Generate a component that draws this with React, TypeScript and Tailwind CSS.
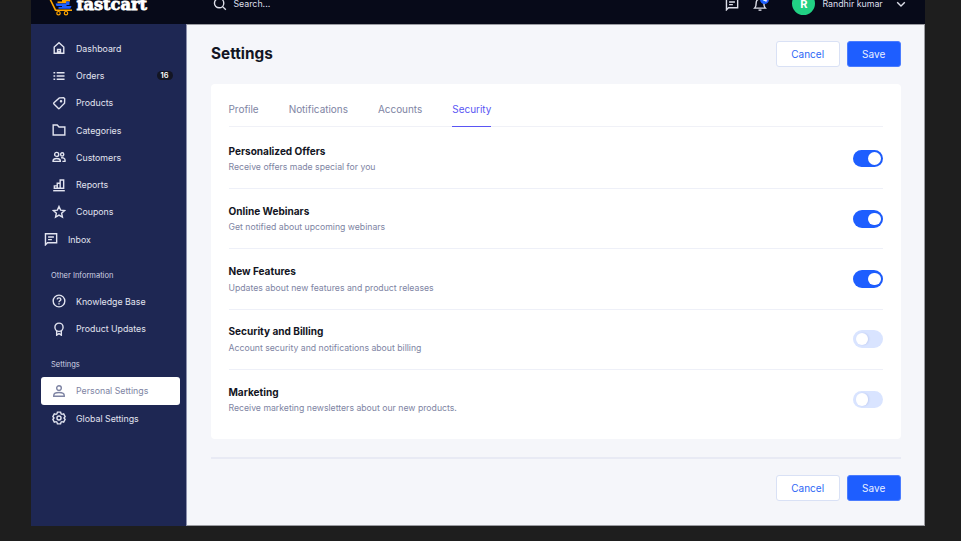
import React from 'react';

const paths: Record<string, React.ReactNode> = {
  home: (
    <>
      <path d="M3.8 21V10.2L12 3l8.200 7.200V21z" />
      <path d="M9.500 21v-6.500h5V21M12 17v4" />
    </>
  ),
  list: <path d="M8 6.500h13.500M8 12h13.500M8 17.500h13.500M2.500 6.500h3M2.500 12h3M2.500 17.500h3" />,
  tag: (
    <>
      <path d="M12.500 3.300l7.500-.3 1.800 1.800-.3 7.500-8.700 8.900a1.500 1.500 0 0 1-2.100 0l-7.400-7.400a1.500 1.500 0 0 1 0-2.100z" />
      <circle cx="15.500" cy="9" r="1" fill="currentColor" />
    </>
  ),
  folder: <path d="M2 20.500v-17h7l3 3.300h10v13.700z" />,
  users: (
    <>
      <circle cx="8" cy="7.500" r="3.500" />
      <path d="M1.800 19.500v-1c0-2.600 2-4 6.200-4s6.200 1.400 6.200 4v1z" />
      <circle cx="17.500" cy="7.500" r="2.700" />
      <path d="M15.500 13.500c4.500-.5 6.800 1 6.800 3.500v2.500h-4.500" />
    </>
  ),
  chart: (
    <>
      <path d="M4 17.500v-4h5v4zM9 17.500V9h5v8.500zM14 17.500V3.500h6v14z" />
      <path d="M2 21.800h20" />
    </>
  ),
  star: <path d="M12 2.500l2.800 6.200 6.700.8-5 4.500 1.400 6.700-5.900-3.400-5.900 3.400L7.500 14l-5-4.500 6.700-.8z" />,
  chat: (
    <>
      <path d="M2.500 22V3h19.200v15.500H6z" />
      <path d="M7 8.500h10M7 13h6.500" />
    </>
  ),
  help: (
    <>
      <circle cx="12" cy="12" r="10" />
      <path d="M8.800 9.300c.3-3.600 6.400-3.400 6.400 0 0 2.200-3.200 2.300-3.200 4.700M12 16v2" />
    </>
  ),
  award: (
    <>
      <circle cx="12" cy="9" r="7" />
      <path d="M8 15v7.500l4-2.500 4 2.500V15" />
    </>
  ),
  user: (
    <>
      <circle cx="12" cy="7" r="4" />
      <path d="M3 21v-1.500c0-3.200 3-5 9-5s9 1.800 9 5V21z" />
    </>
  ),
  gear: (
    <>
      <path d="M9.300 2h5.400l.8 2.800 1.600.9 2.900-.7 2.500 4.600-2 2.400 2 2.400-2.500 4.600-2.900-.7-1.600.9-.8 2.800H9.300l-.8-2.800-1.600-.9-2.900.7-2.500-4.600 2-2.400-2-2.400L4 5l2.900.7 1.600-.9z" />
      <circle cx="12" cy="12" r="3.500" />
    </>
  ),
  search: (
    <>
      <circle cx="10.500" cy="10.500" r="8" />
      <path d="M16.500 16.500l5.500 5.500" />
    </>
  ),
  bell: (
    <>
      <path d="M3 19c2-2 2.500-4 2.500-9.500 0-8 13-8 13 0 0 5.500.5 7.500 2.500 9.500z" />
      <path d="M9.500 22.500h5" />
    </>
  ),
  down: <path d="M5.500 9l6.500 6.500L18.500 9" />,
};

function Icon({ name, className = 'size-3.5' }: { name: string; className?: string }) {
  return (
    <svg viewBox="0 0 24 24" fill="none" stroke="currentColor" strokeWidth="2.400" className={`shrink-0 ${className}`}>
      {paths[name]}
    </svg>
  );
}

function NavItem({ icon, label, badge, active }: { icon: string; label: string; badge?: string; active?: boolean }) {
  return (
    <a
      className={`flex h-[27.3px] items-center rounded-[3px] pl-[10.500px] pr-[7px] ${
        active ? 'bg-white text-[#7e84a3]' : 'text-[#e2e4f0]'
      }`}
    >
      <Icon name={icon} />
      <span className="ml-[10.500px]">{label}</span>
      {badge && (
        <span className="ml-auto flex h-[9.500px] w-4 items-center justify-center rounded-full bg-[#131523] text-[7.500px] font-semibold text-white">
          {badge}
        </span>
      )}
    </a>
  );
}

function Actions() {
  return (
    <div className="flex gap-[7px] text-[10px]">
      <button className="h-[26px] w-[64px] rounded-[3px] border border-[#d9e1f5] bg-white text-[#2d67f6]">Cancel</button>
      <button className="h-[26px] w-[54px] rounded-[3px] border border-[#4a7cff] bg-[#1e5eff] text-[#e8efff]">Save</button>
    </div>
  );
}

function Logo() {
  return (
    <div className="flex items-center">
      <svg viewBox="0 0 26 24" className="h-6 w-[26px]" fill="none">
        <path d="M0 6h1.500l6 12.200H24" stroke="#ffa600" strokeWidth="1.600" />
        <circle cx="10.500" cy="21.200" r="1.700" fill="#070a19" stroke="#ffa600" strokeWidth="1.200" />
        <circle cx="18" cy="21.200" r="1.700" fill="#070a19" stroke="#ffa600" strokeWidth="1.200" />
        <path d="M11 5h11v4.500h-3.500v1.800H9.500V9.500H14V8h-3z" fill="#ffa600" />
        <path d="M7.500 11.500h10.500v-2h3.500v3.500h-3v1h5l-1.200 2.800H10.500V15h3.500v-1H8.500z" fill="#1e5eff" />
      </svg>
      <span className="ml-[2.500px] pt-[3px] font-['DejaVu_Serif',serif] text-[16.200px] font-bold leading-none tracking-[0px] text-white [-webkit-text-stroke:0.8px_white]">
        fastcart
      </span>
    </div>
  );
}

const offers = [
  ['Personalized Offers', 'Receive offers made special for you', true],
  ['Online Webinars', 'Get notified about upcoming webinars', true],
  ['New Features', 'Updates about new features and product releases', true],
  ['Security and Billing', 'Account security and notifications about billing', false],
  ['Marketing', 'Receive marketing newsletters about our new products.', false],
] as const;

export default function App() {
  return (
    <div className="h-[541px] w-[961px] overflow-hidden bg-[#1e1e1e] pl-[31px] font-['Inter',sans-serif] text-[8.800px]">
      <div className="flex h-[525.500px] w-[894.200px] flex-col overflow-hidden bg-[#f5f6fa]">
        <header className="-mt-[16.600px] flex h-[41px] shrink-0 items-center bg-[#070a19] pl-[17px] pr-[17.500px] text-[#dddfe9]">
          <Logo />
          <Icon name="search" className="ml-[66.500px] size-[14px]" />
          <span className="ml-[6px]">Search...</span>
          <Icon name="chat" className="ml-auto size-[14px]" />
          <div className="relative ml-[14px]">
            <Icon name="bell" className="size-[14px]" />
            <span className="absolute -top-[2px] left-[7px] flex size-[9px] items-center justify-center rounded-full bg-[#1e5eff] text-[6px] font-semibold text-white">
              4
            </span>
          </div>
          <span className="ml-[25px] flex size-[23px] items-center justify-center rounded-full bg-[#21d184] text-[11px] font-bold text-white">
            R
          </span>
          <span className="ml-[7px]">Randhir kumar</span>
          <Icon name="down" className="ml-[11px] size-[14px]" />
        </header>

        <div className="flex min-h-0 flex-1">
          <aside className="w-[155.500px] shrink-0 border-r border-[#8c91ad] bg-[#1e2753] pl-[10px] pr-[6px] pt-[10.200px]">
            <nav>
              <NavItem icon="home" label="Dashboard" />
              <NavItem icon="list" label="Orders" badge="16" />
              <NavItem icon="tag" label="Products" />
              <NavItem icon="folder" label="Categories" />
              <NavItem icon="users" label="Customers" />
              <NavItem icon="chart" label="Reports" />
              <NavItem icon="star" label="Coupons" />
              <div className="-ml-2">
                <NavItem icon="chat" label="Inbox" />
              </div>
            </nav>
            <h2 className="mt-[16.800px] pl-2.5 text-[7.500px] leading-[12px] text-[#d0d3e3]">Other Information</h2>
            <nav className="mt-[6px]">
              <NavItem icon="help" label="Knowledge Base" />
              <NavItem icon="award" label="Product Updates" />
            </nav>
            <h2 className="mt-[17px] pl-2.5 text-[7.500px] leading-[12px] text-[#d0d3e3]">Settings</h2>
            <nav className="mt-[6px]">
              <NavItem icon="user" label="Personal Settings" active />
              <NavItem icon="gear" label="Global Settings" />
            </nav>
          </aside>

          <main className="flex-1 border-b border-r border-t border-[#9b9ca2] pl-[24.500px] pr-[23.500px] pt-[15.600px]">
            <div className="flex items-center justify-between">
              <h1 className="pt-px text-[15.300px] font-bold text-[#131523]">Settings</h1>
              <Actions />
            </div>

            <section className="mt-[16.500px] h-[355px] rounded-[4px] bg-white px-[17.500px] pt-[13px]">
              <div className="mb-[2.500px] flex h-[30px] gap-[30px] border-b border-[#f0f1f7] text-[9.950px] leading-[25px] text-[#7e84a3]">
                <span>Profile</span>
                <span>Notifications</span>
                <span>Accounts</span>
                <span className="h-[30px] border-b-[1.500px] border-[#5a55f4] text-[#5a55f4]">Security</span>
              </div>
              {offers.map(([title, text, on]) => (
                <div
                  key={title}
                  className="flex h-[60.200px] items-center justify-between border-b border-[#eef0f8] last:border-transparent"
                >
                  <div className="pt-[2px]">
                    <h3 className="text-[10.050px] font-bold leading-[15px] text-[#131523]">{title}</h3>
                    <p className="mt-[1.400px] text-[8.700px] leading-[15px] text-[#7e84a3]">{text}</p>
                  </div>
                  <span
                    className={`flex h-[17.500px] w-[30px] items-center rounded-full px-[2.500px] ${
                      on ? 'justify-end bg-[#1e5eff]' : 'bg-[#d9e4ff]'
                    }`}
                  >
                    <span className="size-[12.500px] rounded-full bg-white shadow-[1px_0_2px_rgba(30,60,160,0.12)]" />
                  </span>
                </div>
              ))}
            </section>

            <div className="mt-[18.500px] border-t-2 border-[#e8eaf4]" />
            <div className="mt-[16px] flex justify-end">
              <Actions />
            </div>
          </main>
        </div>
      </div>
    </div>
  );
}
